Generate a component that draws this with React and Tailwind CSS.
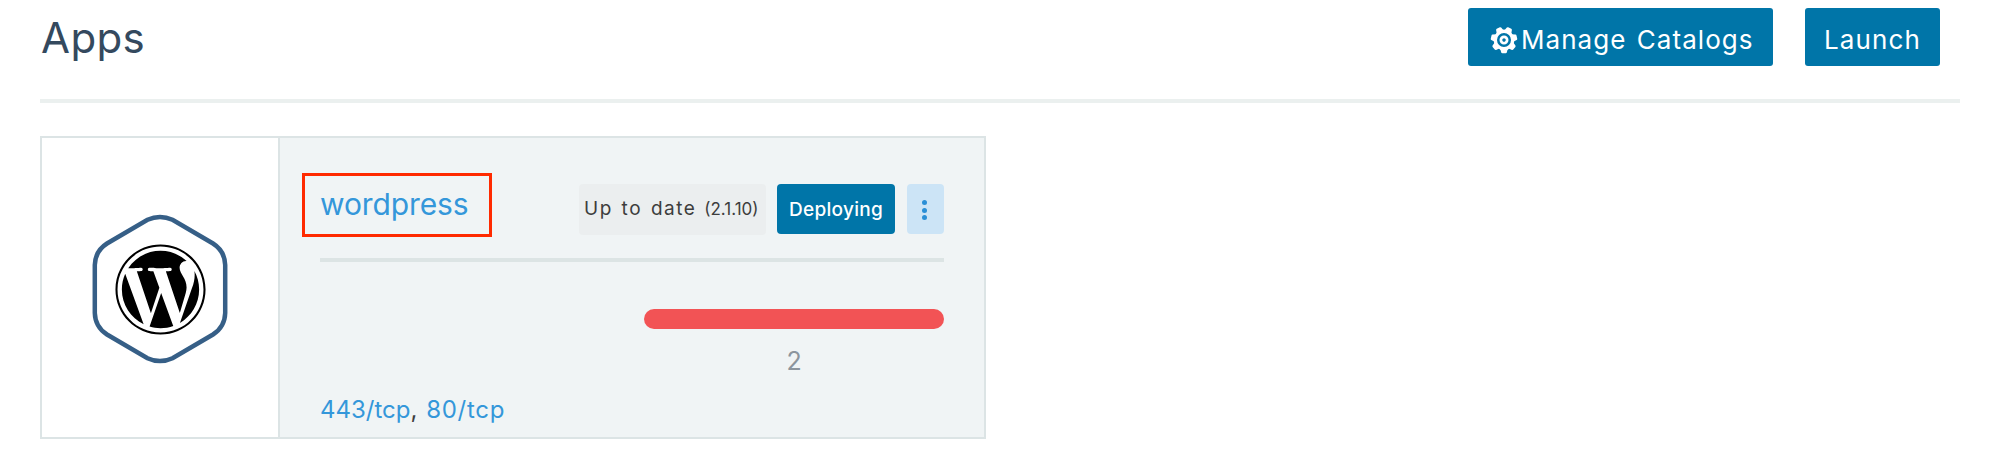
import { FaWordpress } from "react-icons/fa";

const TEETH = [90, 141.4, 192.9, 244.3, 295.7, 347.1, 38.6];

function Gear() {
  return (
    <svg viewBox="-14 -14 28 28" className="h-7 w-7 shrink-0" aria-hidden="true">
      {TEETH.map((a) => (
        <path key={a} d="M8 -4 L12.4 -2.8 Q13.2 -2.4 13.2 -1.7 V1.7 Q13.2 2.4 12.4 2.8 L8 4 Z" fill="#fff" transform={`rotate(${a})`} />
      ))}
      <circle r="8.7" fill="none" stroke="#fff" strokeWidth="3.4" />
      <circle r="3.1" fill="none" stroke="#fff" strokeWidth="2.8" />
    </svg>
  );
}

function Header() {
  return (
    <header className="flex h-[103px] items-start justify-between border-b-4 border-[#ebf0ef] pr-5">
      <h1 className="pl-px text-[42px] leading-[75px] tracking-[0.4px] text-[#34495e]">Apps</h1>
      <div className="flex gap-8 pt-2 text-[26px] leading-none text-white">
        <button className="flex h-[58px] w-[305px] items-center rounded-[3px] bg-[#0075a8] pl-[22px] pt-[5px] whitespace-nowrap">
          <Gear />
          <span className="ml-[3px] tracking-[1.05px] [word-spacing:2px]">Manage Catalogs</span>
        </button>
        <button className="flex h-[58px] w-[135px] items-center rounded-[3px] bg-[#0075a8] pl-[19px] pt-[5px] tracking-[1.1px]">
          Launch
        </button>
      </div>
    </header>
  );
}

function AppLogo() {
  return (
    <div className="flex w-[238px] items-center justify-center border-r-2 border-[#dce4e5] bg-white pt-[3px]">
      <div className="relative flex h-[150px] w-[136px] items-center justify-center">
        <svg viewBox="0 0 136 150" className="absolute inset-0 h-full w-full" aria-hidden="true">
          <path
            d="M55.5 5.8 Q68 0 80.500 5.800 L121 29.500 Q132.800 37 133.200 51 V99 Q132.800 113 121 120.500 L80.500 144.200 Q68 150 55.500 144.200 L15 120.500 Q3.200 113 2.800 99 V51 Q3.200 37 15 29.500 Z"
            fill="none"
            stroke="#365f87"
            strokeWidth="4.500"
          />
        </svg>
        <FaWordpress className="h-[93px] w-[93px] text-black" />
      </div>
    </div>
  );
}

function AppCard() {
  return (
    <article className="mt-[33px] flex h-[303px] w-[946px] border-2 border-[#dce4e5] bg-[#f0f4f5]">
      <AppLogo />
      <div className="flex flex-1 flex-col pl-[22px] pr-10 pt-[35px]">
        <div className="flex items-start">
          <a className="h-16 w-[190px] border-[3px] border-[#ff2a00] pl-[15px] text-[30px] leading-[57px] tracking-[-0.1px] text-[#3497da]">
            wordpress
          </a>
          <div className="mt-[11px] ml-auto flex">
            <div className="flex h-[51px] w-[187px] items-baseline rounded-[4px] bg-[#ebeeef] pl-[5px] whitespace-nowrap text-[#3d3d3d]">
              <span className="text-[19px] leading-[50px] tracking-[1.5px] [word-spacing:2px]">Up to date</span>
              <span className="ml-[8px] text-[17px] leading-[50px]">(2.1.10)</span>
            </div>
            <button className="ml-[11px] flex h-[50px] w-[118px] rounded-[4px] bg-[#0075a8] pl-[12px] text-[19px] leading-[51px] font-medium tracking-[0.3px] text-white">
              Deploying
            </button>
            <button className="ml-3 flex h-[50px] w-[37px] flex-col items-center justify-center gap-[2.500px] rounded-[4px] bg-[#cce4f6] pt-[2px] pr-[2px]">
              <span className="h-[5px] w-[5px] rounded-full bg-[#2b8fd6]" />
              <span className="h-[5px] w-[5px] rounded-full bg-[#2b8fd6]" />
              <span className="h-[5px] w-[5px] rounded-full bg-[#2b8fd6]" />
            </button>
          </div>
        </div>
        <div className="mt-[21px] ml-[18px] h-1 bg-[#dce4e4]" />
        <div className="mt-[47px] ml-auto w-[300px]">
          <div className="h-5 rounded-full bg-[#f25355]" />
          <div className="mt-[12px] text-center text-[25px] leading-10 text-[#8c959d]">2</div>
        </div>
        <div className="mt-[9px] ml-[18px] text-2xl leading-10 text-[#3d3d3d]">
          <a className="text-[#3497da]">443/tcp</a>
          <span>, </span>
          <a className="ml-[2px] tracking-[0.7px] text-[#3497da]">80/tcp</a>
        </div>
      </div>
    </article>
  );
}

export default function App() {
  return (
    <main className="h-[450px] bg-white pl-10 pr-10 font-['Inter',sans-serif]">
      <Header />
      <AppCard />
    </main>
  );
}
